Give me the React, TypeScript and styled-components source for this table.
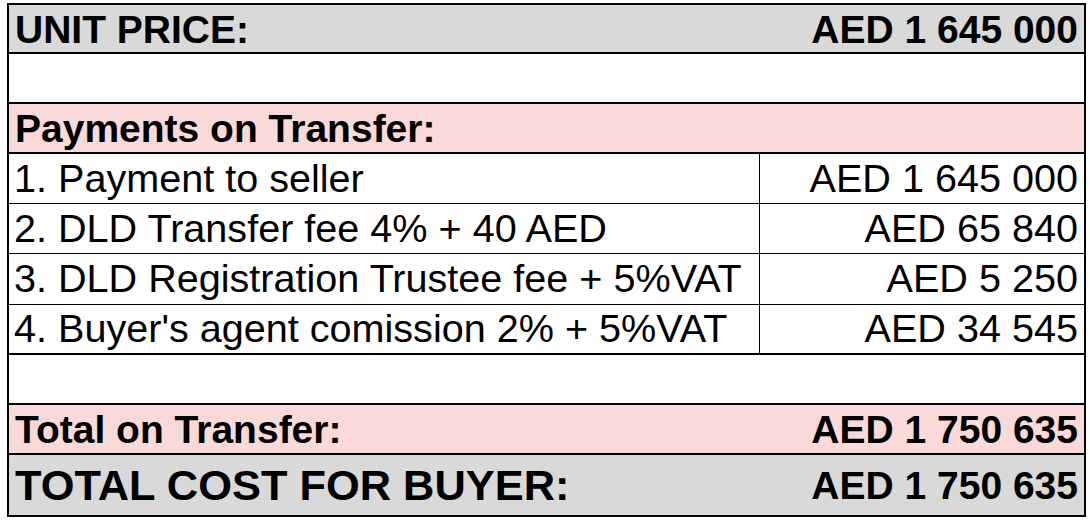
import React from "react";
import styled, { createGlobalStyle } from "styled-components";

const GlobalStyle = createGlobalStyle`
  html, body {
    margin: 0;
    padding: 0;
    background: #ffffff;
  }
  body {
    font-family: "Liberation Sans", Arial, sans-serif;
    color: #000000;
  }
`;

const Sheet = styled.div`
  margin: 3px 0 0 7px;
  width: 1079px;
  box-sizing: border-box;
  border: 2px solid #000;
  display: flex;
  flex-direction: column;
`;

type Tone = "grey" | "pink" | "white";
const toneColor: Record<Tone, string> = {
  grey: "#d9d9d9",
  pink: "#f9dad8",
  white: "#ffffff",
};

const Row = styled.div<{ $h: number; $tone: Tone; $border: number }>`
  box-sizing: border-box;
  height: ${(p) => p.$h}px;
  background: ${(p) => toneColor[p.$tone]};
  border-bottom: ${(p) => p.$border}px solid #000;
  display: flex;
  align-items: center;
  justify-content: space-between;
  padding: 1px 6px 0 6px;
`;

const ItemRow = styled.div<{ $h: number; $border: number }>`
  box-sizing: border-box;
  height: ${(p) => p.$h}px;
  border-bottom: ${(p) => p.$border}px solid #000;
  display: grid;
  grid-template-columns: 751px 1fr;
`;

const Cell = styled.div<{ $right?: boolean }>`
  display: flex;
  align-items: center;
  justify-content: ${(p) => (p.$right ? "flex-end" : "flex-start")};
  padding: ${(p) => (p.$right ? "0 6px 0 0" : "0 0 0 5px")};
  border-right: ${(p) => (p.$right ? "none" : "1px solid #000")};
  font-size: 39.6px;
  font-weight: 400;
  white-space: nowrap;
  line-height: 1;
`;

const Label = styled.span<{ $size: number }>`
  font-size: ${(p) => p.$size}px;
  font-weight: 700;
  white-space: nowrap;
  line-height: 1;
`;

const items = [
  { label: "1. Payment to seller", value: "AED 1 645 000", h: 50, b: 1 },
  { label: "2. DLD Transfer fee 4% + 40 AED", value: "AED 65 840", h: 50, b: 1 },
  { label: "3. DLD Registration Trustee fee + 5%VAT", value: "AED 5 250", h: 51, b: 1 },
  { label: "4. Buyer's agent comission 2% + 5%VAT", value: "AED 34 545", h: 50, b: 2 },
];

export default function App() {
  return (
    <>
      <GlobalStyle />
      <Sheet>
        <Row $h={49} $tone="grey" $border={2}>
          <Label $size={39}>UNIT PRICE:</Label>
          <Label $size={39}>AED 1 645 000</Label>
        </Row>
        <Row $h={50} $tone="white" $border={2} />
        <Row $h={50} $tone="pink" $border={2}>
          <Label $size={39}>Payments on Transfer:</Label>
        </Row>
        {items.map((it) => (
          <ItemRow key={it.label} $h={it.h} $border={it.b}>
            <Cell>{it.label}</Cell>
            <Cell $right>{it.value}</Cell>
          </ItemRow>
        ))}
        <Row $h={50} $tone="white" $border={2} />
        <Row $h={50} $tone="pink" $border={2}>
          <Label $size={39}>Total on Transfer:</Label>
          <Label $size={39}>AED 1 750 635</Label>
        </Row>
        <Row $h={60} $tone="grey" $border={0}>
          <Label $size={43.4}>TOTAL COST FOR BUYER:</Label>
          <Label $size={39}>AED 1 750 635</Label>
        </Row>
      </Sheet>
    </>
  );
}
